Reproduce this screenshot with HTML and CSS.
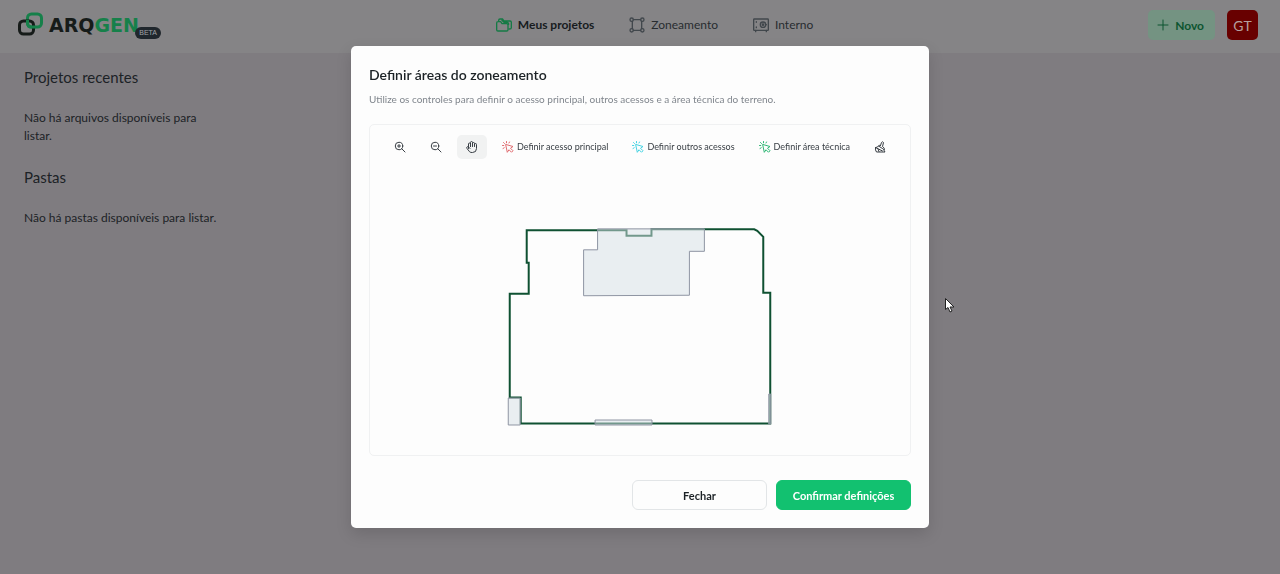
FILE: index.html
```html
<!DOCTYPE html>
<html lang="pt-BR">
<head>
<meta charset="utf-8">
<meta name="viewport" content="width=device-width, initial-scale=1">
<title>ARQGEN</title>
<link rel="stylesheet" href="styles.css">
</head>
<body>
<svg class="sprite" aria-hidden="true">
  <symbol id="click" viewBox="0 0 24 24"><path d="M8 7l14 4-5 3.500 5 5-3 3-5-5-3 4.500z"/><path d="M9 1v2.500M3 3l2 2M1 9h2.500M2 15l2.500-1.500M15 2l-1 2"/></symbol>
</svg>
<header class="topbar">
  <a class="brand" href="#" aria-label="ARQGEN beta">
    <svg class="brand-mark" viewBox="0 0 26 26" aria-hidden="true">
      <rect class="mark-green" x="9.500" y="2" width="14" height="13" rx="4"/>
      <rect class="mark-dark" x="1.500" y="9" width="14" height="13" rx="4"/>
      <path class="mark-green" d="M9.500 8v3q0 4 4 4h4"/>
    </svg>
    <span class="brand-name">ARQ<span class="brand-accent">GEN</span></span>
    <span class="beta">BETA</span>
  </a>
  <nav class="nav">
    <a class="nav-link active" href="#"><svg class="icon nav-icon" viewBox="0 0 24 24"><path d="M1 9q0-2 2-2h4l2 3h7q2 0 2 2v7q0 2-2 2H3q-2 0-2-2zM4 7V5q0-2 2-2h4l2 3h9q2 0 2 2v8q0 2-3 2M9 5l3 3h5q2 0 2 3"/></svg>Meus projetos</a>
    <a class="nav-link" href="#"><svg class="icon nav-icon" viewBox="0 0 24 24"><circle cx="4" cy="4" r="2.500"/><circle cx="20" cy="4" r="2.500"/><circle cx="4" cy="20" r="2.500"/><circle cx="20" cy="20" r="2.500"/><path d="M6.500 4h11M6.500 20h11M5 6.500v11M19 6.500v11"/></svg>Zoneamento</a>
    <a class="nav-link" href="#"><svg class="icon nav-icon" viewBox="0 0 24 24"><rect x="1" y="3" width="22" height="17" rx="1"/><circle cx="15" cy="11.500" r="4"/><circle cx="15" cy="11.500" r="1"/><path d="M19 11.500h1M5 7v1M5 15v1M4 20v2M20 20v2"/></svg>Interno</a>
  </nav>
  <div class="actions">
    <button class="new-button" type="button"><svg class="icon plus" viewBox="0 0 24 24"><path d="M12 2v20M2 12h20"/></svg>Novo</button>
    <button class="avatar" type="button">GT</button>
  </div>
</header>
<aside class="sidebar">
  <section class="group">
    <h2 class="group-title">Projetos recentes</h2>
    <p class="group-text">Não há arquivos disponíveis para listar.</p>
  </section>
  <section class="group">
    <h2 class="group-title">Pastas</h2>
    <p class="group-text">Não há pastas disponíveis para listar.</p>
  </section>
</aside>
<div class="overlay">
  <section class="dialog" role="dialog" aria-modal="true" aria-labelledby="dialog-title">
    <h1 class="dialog-title" id="dialog-title">Definir áreas do zoneamento</h1>
    <p class="dialog-text">Utilize os controles para definir o acesso principal, outros acessos e a área técnica do terreno.</p>
    <div class="editor">
      <div class="toolbar" role="toolbar">
        <button class="tool" type="button" aria-label="Aproximar"><svg class="icon" viewBox="0 0 24 24"><circle cx="10" cy="10" r="7.500"/><path d="M15.500 15.500L22 22M7 10h6M10 7v6"/></svg></button>
        <button class="tool" type="button" aria-label="Afastar"><svg class="icon" viewBox="0 0 24 24"><circle cx="10" cy="10" r="7.500"/><path d="M15.500 15.500L22 22M7 10h6"/></svg></button>
        <button class="tool selected" type="button" aria-label="Mover"><svg class="icon" viewBox="0 0 24 24"><path d="M17 11V5a2 2 0 0 0-4 0v6M13 10V3a2 2 0 0 0-4 0v8M9 11V6a2 2 0 0 0-4 0v9M17 7a2 2 0 0 1 4 0v8a8 8 0 0 1-8 8h-1c-3 0-5-1-6-3l-4-5a2 2 0 0 1 3-3L8 15"/></svg></button>
        <button class="tool" type="button"><svg class="icon red"><use href="#click"/></svg>Definir acesso principal</button>
        <button class="tool" type="button"><svg class="icon cyan"><use href="#click"/></svg>Definir outros acessos</button>
        <button class="tool" type="button"><svg class="icon green"><use href="#click"/></svg>Definir área técnica</button>
        <button class="tool" type="button" aria-label="Limpar"><svg class="icon" viewBox="0 0 24 24"><path d="M13 9l2-6q2-3 4 0l-2 8q4 2 4 6M13 9q-3-1-4 1l8 5M9 10q-1 3-6 3-1 5 2 9h17l-3-5M8 16l2 5M3 13l14 7"/></svg></button>
      </div>
      <svg class="plan" viewBox="370 159 541 297" role="img" aria-label="Terreno">
        <path class="lot" d="M510 398V294H529V263H527V230.500H627V236H652V229.500H755L758 231L764 237V293H771V424H521V398Z"/>
        <path class="zone" d="M598 229H705V251.500H690V295.500L584 296V250H598Z"/>
        <path class="zone" d="M508.500 398.500H520.500V425.500H508.500Z"/>
        <path class="zone" d="M595.500 420.500H652.500V425.500H595.500Z"/>
        <path class="zone" d="M769.500 394.500H771.500V424.500H769.500Z"/>
      </svg>
    </div>
    <div class="footer">
      <button class="button" type="button">Fechar</button>
      <button class="button primary" type="button">Confirmar definições</button>
    </div>
  </section>
</div>
<svg class="pointer" viewBox="0 0 10 15" aria-hidden="true"><path d="M.5.5v11l2.500-2 2 4.500 2-1-2-4h4z"/></svg>
</body>
</html>
```
FILE: styles.css
```css
* { box-sizing: border-box; }
body {
  margin: 0;
  min-height: 100vh;
  background: #7f7c80;
  color: #1c2226;
  font-family: Lato, sans-serif;
  font-size: 12px;
}
h1, h2, p { margin: 0; }
button { font: inherit; color: inherit; border: 0; background: none; padding: 0; }
a { color: inherit; text-decoration: none; }
.sprite { position: absolute; width: 0; height: 0; }
.icon {
  width: 12px;
  height: 12px;
  flex: none;
  fill: none;
  stroke: currentColor;
  stroke-width: 2;
  stroke-linecap: round;
  stroke-linejoin: round;
}
.topbar {
  display: flex;
  justify-content: space-between;
  align-items: center;
  height: 53px;
  padding: 0 22px 3px 18px;
  background: #858486;
}
.brand { position: relative; display: flex; align-items: center; gap: 5px; padding-right: 22px; }
.brand-mark { width: 26px; height: 26px; fill: none; stroke-width: 3; }
.mark-green { stroke: #16804a; }
.mark-dark { stroke: #161b19; }
.brand-name { font: bold 19px/26px "DejaVu Sans", sans-serif; color: #161b19; }
.brand-accent { color: #16804a; }
.beta {
  position: absolute;
  right: 0;
  bottom: -1px;
  padding: 0 4px;
  border-radius: 6px;
  background: #20272d;
  color: #a0a4a8;
  font: 7px/12px "Liberation Sans", sans-serif;
}
.nav { display: flex; gap: 35px; }
.nav-link { display: flex; align-items: center; gap: 6px; font-size: 12px; line-height: 20px; color: #282c30; }
.nav-icon { width: 16px; height: 16px; color: #41474c; }
.active { font-weight: 700; color: #171b1e; }
.active .nav-icon { color: #157a45; }
.actions { display: flex; align-items: center; gap: 12px; }
.new-button {
  display: flex;
  align-items: center;
  gap: 6px;
  height: 30px;
  padding: 0 11px 0 9px;
  border-radius: 5px;
  background: #749382;
  color: #0d5530;
  font-size: 12px;
  font-weight: 700;
}
.avatar { width: 31px; height: 30px; border-radius: 5px; background: #680000; color: #b5a0a0; font-size: 14px; }
.sidebar { width: 240px; padding: 13px 16px 13px 24px; }
.group + .group { margin-top: 21px; }
.group-title { font-size: 15px; line-height: 22px; font-weight: 400; }
.group-text { margin-top: 21px; line-height: 18px; }
.group:first-child .group-text { padding-right: 24px; }
.overlay { position: fixed; inset: 0; display: flex; align-items: center; justify-content: center; }
.dialog {
  width: 578px;
  max-width: 100%;
  padding: 18px;
  border-radius: 5px;
  background: #fdfdfd;
  box-shadow: 0 6px 16px #0002;
}
.dialog-title { font-size: 14px; line-height: 22px; font-weight: 600; }
.dialog-text { margin-top: 4px; color: #80868d; font-size: 10px; line-height: 18px; }
.editor { margin-top: 16px; padding-top: 10px; border: 1px solid #f0f1f2; border-radius: 5px; }
.toolbar { display: flex; justify-content: center; gap: 6px; }
.tool {
  display: flex;
  align-items: center;
  gap: 3px;
  height: 24px;
  padding: 0 9px;
  border-radius: 5px;
  color: #383e44;
  font-size: 9px;
}
.selected { background: #f1f2f2; }
.red { color: #e06c70; }
.cyan { color: #45d3e2; }
.green { color: #2eb774; }
.plan { display: block; width: 100%; }
.lot { fill: none; stroke: #0f5132; stroke-width: 2; }
.zone { fill: #d5dfe680; stroke: #8f95a3; stroke-width: 1; }
.footer { display: flex; justify-content: flex-end; gap: 9px; margin-top: 24px; }
.button { width: 135px; height: 30px; border: 1px solid #e2e5e7; border-radius: 6px; font-size: 11px; font-weight: 700; }
.primary { border-color: #12c170; background: #12c170; color: #fff; }
.pointer { position: absolute; left: 945px; top: 298px; width: 10px; height: 15px; fill: #fff; stroke: #222; stroke-width: 1; }
```
